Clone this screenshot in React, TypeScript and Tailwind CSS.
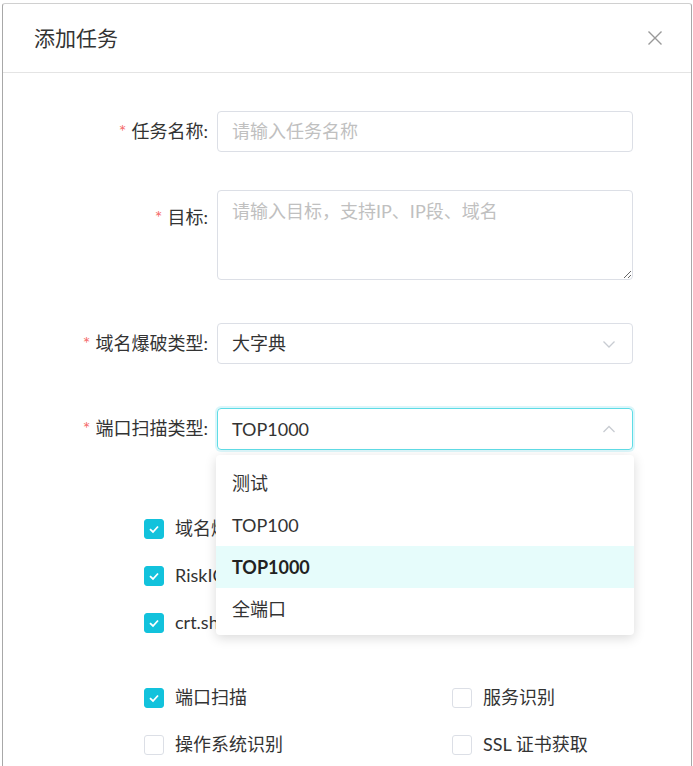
import React from 'react';

const font = { fontFamily: 'Lato, "Noto Sans CJK SC", sans-serif' };

function Label({ text, top = false }: { text: string; top?: boolean }) {
  return (
    <div
      className={`w-[214px] shrink-0 pr-[9px] text-right text-[18px] text-[#333] ${
        top ? 'pt-[15px] leading-[24px]' : 'leading-[41px]'
      }`}
    >
      <span className="mr-[5px] text-[#f56c6c]">*</span>
      {text}:
    </div>
  );
}

function Chevron({ up = false }: { up?: boolean }) {
  return (
    <svg width="14" height="14" viewBox="0 0 14 14" className="text-[#c8ccd2]">
      <path
        d={up ? 'M1.5 10 L7 4.5 L12.5 10' : 'M1.5 4.5 L7 10 L12.5 4.5'}
        fill="none"
        stroke="currentColor"
        strokeWidth="1.3"
      />
    </svg>
  );
}

function Check({ checked, label }: { checked: boolean; label: string }) {
  return (
    <div className="flex h-[47px] items-center gap-[11px]">
      <span
        className={`flex h-[20px] w-[20px] shrink-0 items-center justify-center rounded-[3px] border ${
          checked ? 'border-[#12c2dc] bg-[#12c2dc]' : 'border-[#dcdfe6] bg-white'
        }`}
      >
        {checked && (
          <svg width="12" height="12" viewBox="0 0 12 12">
            <path d="M2 6.2 L5 9 L10 3.5" fill="none" stroke="white" strokeWidth="1.8" />
          </svg>
        )}
      </span>
      <span className="text-[18px] text-[#333]">{label}</span>
    </div>
  );
}

export default function App() {
  const options = ['测试', 'TOP100', 'TOP1000', '全端口'];

  return (
    <div className="h-[766px] w-[693px] overflow-hidden bg-white" style={font}>
      <div className="ml-[2px] mt-[3px] h-[800px] w-[690px] rounded-t-[3px] border-x border-t border-x-[#a8a8a8] border-t-[#d0d0d0] bg-white">
        {/* header */}
        <div className="flex h-[69px] items-center justify-between border-b border-[#e4e4e4] pl-[31px] pr-[28px]">
          <span className="text-[21px] text-[#333]">添加任务</span>
          <svg width="16" height="16" viewBox="0 0 16 16" className="text-[#999]">
            <path d="M1.5 1.5 L14.5 14.5 M14.5 1.5 L1.5 14.5" stroke="currentColor" strokeWidth="1.4" />
          </svg>
        </div>

        {/* form */}
        <div className="pt-[38px]">
          <div className="flex">
            <Label text="任务名称" />
            <div className="flex h-[41px] w-[416px] items-center rounded-[4px] border border-[#dcdfe6] px-[14px] text-[18px] text-[#c0c0c0]">
              请输入任务名称
            </div>
          </div>

          <div className="mt-[38px] flex">
            <Label text="目标" top />
            <textarea
              className="h-[90px] w-[416px] resize-y rounded-[4px] border border-[#dcdfe6] px-[14px] py-[6px] text-[18px] leading-[28px] text-[#333] outline-none placeholder:text-[#c0c0c0]"
              placeholder="请输入目标，支持IP、IP段、域名"
              style={font}
            />
          </div>

          <div className="mt-[43px] flex">
            <Label text="域名爆破类型" />
            <div className="flex h-[41px] w-[416px] items-center justify-between rounded-[4px] border border-[#dcdfe6] pl-[14px] pr-[16px] text-[18px] text-[#333]">
              大字典
              <Chevron />
            </div>
          </div>

          <div className="relative mt-[44px] flex">
            <Label text="端口扫描类型" />
            <div className="flex h-[42px] w-[416px] items-center justify-between rounded-[4px] border border-[#5fdce6] pl-[14px] pr-[16px] text-[18px] text-[#333] shadow-[0_0_0_2px_rgba(18,194,220,0.15)]">
              TOP1000
              <Chevron up />
            </div>

            <div className="absolute left-[213px] top-[47px] z-10 w-[418px] rounded-[4px] bg-white pb-[5px] pt-[7px] shadow-[0_3px_12px_rgba(0,0,0,0.15)]">
              {options.map((o) => (
                <div
                  key={o}
                  className={`flex h-[42px] items-center px-[16px] text-[18px] ${
                    o === 'TOP1000' ? 'bg-[#e6fcfb] font-bold text-[#222]' : 'text-[#333]'
                  }`}
                >
                  {o}
                </div>
              ))}
            </div>
          </div>

          {/* checkboxes */}
          <div className="mt-[55px] pl-[141px]">
            <Check checked label="域名爆破" />
            <Check checked label="RiskIQ 调用" />
            <Check checked label="crt.sh 调用" />
          </div>

          <div className="mt-[28px] grid grid-cols-[308px_1fr] pl-[141px]">
            <Check checked label="端口扫描" />
            <Check checked={false} label="服务识别" />
            <Check checked={false} label="操作系统识别" />
            <Check checked={false} label="SSL 证书获取" />
          </div>
        </div>
      </div>
    </div>
  );
}
